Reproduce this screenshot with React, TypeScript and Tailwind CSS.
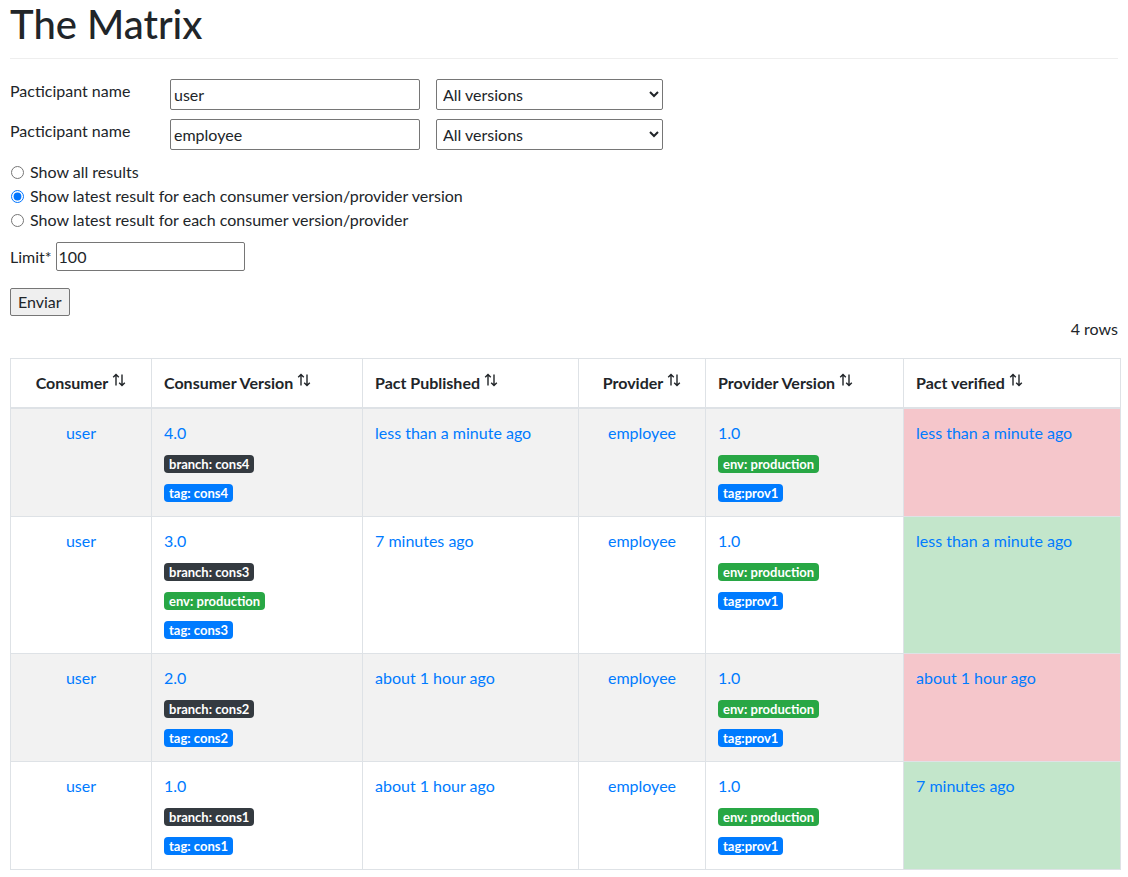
import React from "react";

type Badge = { text: string; kind: "dark" | "green" | "blue" };

type Row = {
  consumer: string;
  cVersion: string;
  cBadges: Badge[];
  published: string;
  provider: string;
  pVersion: string;
  pBadges: Badge[];
  verified: string;
  ok: boolean;
};

const provBadges: Badge[] = [
  { text: "env: production", kind: "green" },
  { text: "tag:prov1", kind: "blue" },
];

const rows: Row[] = [
  {
    consumer: "user",
    cVersion: "4.0",
    cBadges: [
      { text: "branch: cons4", kind: "dark" },
      { text: "tag: cons4", kind: "blue" },
    ],
    published: "less than a minute ago",
    provider: "employee",
    pVersion: "1.0",
    pBadges: provBadges,
    verified: "less than a minute ago",
    ok: false,
  },
  {
    consumer: "user",
    cVersion: "3.0",
    cBadges: [
      { text: "branch: cons3", kind: "dark" },
      { text: "env: production", kind: "green" },
      { text: "tag: cons3", kind: "blue" },
    ],
    published: "7 minutes ago",
    provider: "employee",
    pVersion: "1.0",
    pBadges: provBadges,
    verified: "less than a minute ago",
    ok: true,
  },
  {
    consumer: "user",
    cVersion: "2.0",
    cBadges: [
      { text: "branch: cons2", kind: "dark" },
      { text: "tag: cons2", kind: "blue" },
    ],
    published: "about 1 hour ago",
    provider: "employee",
    pVersion: "1.0",
    pBadges: provBadges,
    verified: "about 1 hour ago",
    ok: false,
  },
  {
    consumer: "user",
    cVersion: "1.0",
    cBadges: [
      { text: "branch: cons1", kind: "dark" },
      { text: "tag: cons1", kind: "blue" },
    ],
    published: "about 1 hour ago",
    provider: "employee",
    pVersion: "1.0",
    pBadges: provBadges,
    verified: "7 minutes ago",
    ok: true,
  },
];

const SortIcon = () => (
  <svg
    width="14"
    height="14"
    viewBox="0 0 14 14"
    fill="none"
    stroke="currentColor"
    strokeWidth="1.4"
    className="inline-block align-top mt-[2px] ml-[4px]"
  >
    <path d="M4 12.5V1.5M1.2 4.3L4 1.5l2.8 2.8" />
    <path d="M10 1.5v11M7.2 9.7L10 12.5l2.8-2.8" />
  </svg>
);

const BadgeTag = ({ b }: { b: Badge }) => {
  const color =
    b.kind === "dark" ? "bg-[#343a40]" : b.kind === "green" ? "bg-[#28a745]" : "bg-[#007bff]";
  return (
    <div className="mt-[11px] flex">
      <span className={`${color} h-[18px] flex items-center text-white text-[13px] font-bold leading-none px-[5px] rounded-[4px]`}>
        {b.text}
      </span>
    </div>
  );
};

const Th = ({ label, center, w }: { label: string; center?: boolean; w: string }) => (
  <th
    className={`${w} border border-[#dee2e6] border-b-2 px-3 py-3 font-bold align-bottom ${center ? "text-center" : "text-left"}`}
  >
    {label}
    <SortIcon />
  </th>
);

const td = "border border-[#dee2e6] px-3 pt-3 pb-[14px] align-top";

export default function App() {
  return (
    <div className="min-h-screen bg-white text-[#212529] text-[16px] leading-6 px-[10px] pb-2 font-['Lato','Liberation_Sans',sans-serif]">
      <h1 className="text-[40px] leading-[48px] font-medium">The Matrix</h1>
      <hr className="mt-[10px] border-t border-[#eeeeee]" />

      <div className="mt-[20px] flex flex-col gap-[9px]">
        {["user", "employee"].map((v) => (
          <div key={v} className="flex items-start">
            <label className="w-[160px]">Pacticipant name</label>
            <input
              readOnly
              value={v}
              className="w-[250px] h-[31px] border border-[#767676] rounded-[2px] px-[3px] bg-white"
            />
            <select className="ml-[16px] w-[227px] h-[31px] border border-[#767676] rounded-[2px] bg-white pl-[2px]">
              <option>All versions</option>
            </select>
          </div>
        ))}
      </div>

      <div className="mt-[10px] flex flex-col">
        {[
          ["Show all results", false],
          ["Show latest result for each consumer version/provider version", true],
          ["Show latest result for each consumer version/provider", false],
        ].map(([t, c]) => (
          <label key={t as string} className="flex items-center gap-[6px] h-6">
            <input type="radio" name="latest" readOnly checked={c as boolean} className="w-[13px] h-[13px] ml-[1px]" />
            <span>{t as string}</span>
          </label>
        ))}
      </div>

      <div className="mt-[10px] flex items-center gap-[4px]">
        <label>Limit*</label>
        <input
          readOnly
          value="100"
          className="w-[189px] h-[29px] border border-[#767676] rounded-[2px] px-[2px] bg-white"
        />
      </div>

      <button className="mt-[17px] h-[28px] px-[7px] border border-[#767676] rounded-[2px] bg-[#efefef]">
        Enviar
      </button>

      <div className="text-right mt-[1px]">4 rows</div>

      <table className="mt-[17px] w-full border-collapse table-fixed">
        <thead>
          <tr>
            <Th label="Consumer" center w="w-[141px]" />
            <Th label="Consumer Version" w="w-[211px]" />
            <Th label="Pact Published" w="w-[216px]" />
            <Th label="Provider" center w="w-[127px]" />
            <Th label="Provider Version" w="w-[198px]" />
            <Th label="Pact verified" w="w-[217px]" />
          </tr>
        </thead>
        <tbody>
          {rows.map((r, i) => (
            <tr key={i} className={i % 2 === 0 ? "bg-[#f2f2f2]" : "bg-white"}>
              <td className={`${td} text-center text-[#007bff]`}>{r.consumer}</td>
              <td className={td}>
                <div className="text-[#007bff] h-[23px]">{r.cVersion}</div>
                {r.cBadges.map((b) => (
                  <BadgeTag key={b.text} b={b} />
                ))}
              </td>
              <td className={`${td} text-[#007bff]`}>{r.published}</td>
              <td className={`${td} text-center text-[#007bff]`}>{r.provider}</td>
              <td className={td}>
                <div className="text-[#007bff] h-[23px]">{r.pVersion}</div>
                {r.pBadges.map((b) => (
                  <BadgeTag key={b.text} b={b} />
                ))}
              </td>
              <td className={`${td} text-[#007bff] ${r.ok ? "bg-[#c3e6cb]" : "bg-[#f5c6cb]"}`}>
                {r.verified}
              </td>
            </tr>
          ))}
        </tbody>
      </table>
    </div>
  );
}
